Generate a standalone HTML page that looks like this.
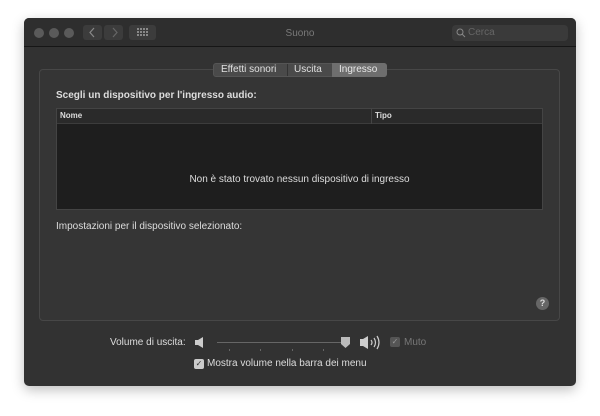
<!DOCTYPE html>
<html><head><meta charset="utf-8"><style>
*{margin:0;padding:0;box-sizing:border-box}
body{width:600px;height:416px;background:#fff;position:relative;font-family:"Liberation Sans",sans-serif;overflow:hidden}
.a{position:absolute}
.win{left:24px;top:18px;width:552px;height:368px;background:#323232;border-radius:5px;box-shadow:0 4px 12px rgba(0,0,0,.25);overflow:hidden}
.tb{left:0;top:0;width:552px;height:29px;background:#2e2e2e;border-bottom:1px solid #161616}
.dot{width:10px;height:10px;border-radius:50%;background:#5a5a5a;top:10px}
.btn{background:#3c3c3c;border-radius:3px;height:15px;top:7px}
.t{color:#ddd;font-size:10px;white-space:nowrap}
</style></head><body>
<div class="a win">
 <div class="a tb">
  <div class="a dot" style="left:10px"></div>
  <div class="a dot" style="left:25px"></div>
  <div class="a dot" style="left:40px"></div>
  <div class="a btn" style="left:59px;width:19px"></div>
  <div class="a btn" style="left:80px;width:19px"></div>
  <svg class="a" style="left:64px;top:9px" width="10" height="11"><path d="M6 1L2 5.5 6 10" stroke="#888" fill="none" stroke-width="1.2"/></svg>
  <svg class="a" style="left:86px;top:9px" width="10" height="11"><path d="M3 1L7 5.5 3 10" stroke="#666" fill="none" stroke-width="1.2"/></svg>
  <div class="a btn" style="left:105px;width:27px"></div>
  <svg class="a" style="left:113px;top:10px" width="11" height="9"><g fill="#888"><rect x="0" y="0" width="2" height="2"/><rect x="3" y="0" width="2" height="2"/><rect x="6" y="0" width="2" height="2"/><rect x="9" y="0" width="2" height="2"/><rect x="0" y="3" width="2" height="2"/><rect x="3" y="3" width="2" height="2"/><rect x="6" y="3" width="2" height="2"/><rect x="9" y="3" width="2" height="2"/><rect x="0" y="6" width="2" height="2"/><rect x="3" y="6" width="2" height="2"/><rect x="6" y="6" width="2" height="2"/><rect x="9" y="6" width="2" height="2"/></g></svg>
  <div class="a" style="left:0;width:552px;top:10px;text-align:center;color:#7a7a7a;font-size:10px">Suono</div>
  <div class="a" style="left:428px;top:7px;width:116px;height:16px;background:#3a3a3a;border-radius:4px"></div>
  <svg class="a" style="left:432px;top:10px" width="10" height="10"><circle cx="4" cy="4" r="3" stroke="#888" fill="none"/><path d="M6 6L9 9" stroke="#888"/></svg>
  <div class="a" style="left:444px;top:9px;color:#666;font-size:10px">Cerca</div>
 </div>
 <div class="a" style="left:15px;top:51px;width:521px;height:252px;border:1px solid #474747;border-radius:4px;background:#353535"></div>
 <div class="a" style="left:189px;top:45px;width:174px;height:14px;border-radius:3px;background:#4a4a4a;border:1px solid #555"></div>
 <div class="a" style="left:308px;top:45px;width:55px;height:14px;border-radius:0 3px 3px 0;background:#6e6e6e"></div>
 <div class="a" style="left:263px;top:46px;width:1px;height:12px;background:#333"></div>
 <div class="a t" style="left:197px;top:46px;color:#e0e0e0">Effetti sonori</div>
 <div class="a t" style="left:270px;top:46px;color:#e0e0e0">Uscita</div>
 <div class="a t" style="left:315px;top:46px;color:#e8e8e8">Ingresso</div>
 <div class="a t" style="left:32px;top:72px;font-weight:bold">Scegli un dispositivo per l'ingresso audio:</div>
 <div class="a" style="left:32px;top:90px;width:487px;height:102px;background:#1e1e1e;border:1px solid #444"></div>
 <div class="a" style="left:33px;top:91px;width:485px;height:15px;background:#2a2a2a;border-bottom:1px solid #3c3c3c"></div>
 <div class="a" style="left:347px;top:91px;width:1px;height:15px;background:#444"></div>
 <div class="a t" style="left:36px;top:93px;font-size:8px;font-weight:bold">Nome</div>
 <div class="a t" style="left:351px;top:93px;font-size:8px;font-weight:bold">Tipo</div>
 <div class="a t" style="left:32px;width:487px;text-align:center;top:156px">Non è stato trovato nessun dispositivo di ingresso</div>
 <div class="a t" style="left:32px;top:203px">Impostazioni per il dispositivo selezionato:</div>
 <div class="a" style="left:512px;top:279px;width:13px;height:13px;border-radius:50%;background:#666;color:#ddd;font-size:9px;font-weight:bold;text-align:center;line-height:13px">?</div>
 <div class="a t" style="left:86px;top:319px">Volume di uscita:</div>
 <svg class="a" style="left:170px;top:318px" width="12" height="13"><path d="M1 4H4L9 1V12L4 9H1Z" fill="#ccc"/></svg>
 <div class="a" style="left:193px;top:324px;width:130px;height:1px;background:#666"></div>
 <div class="a" style="left:205px;top:331px;width:1px;height:2px;background:#666"></div>
 <div class="a" style="left:236px;top:331px;width:1px;height:2px;background:#666"></div>
 <div class="a" style="left:268px;top:331px;width:1px;height:2px;background:#666"></div>
 <div class="a" style="left:299px;top:331px;width:1px;height:2px;background:#666"></div>
 <svg class="a" style="left:316px;top:318px" width="11" height="13"><path d="M1 1H10V8L5.5 12L1 8Z" fill="#bbb"/></svg>
 <svg class="a" style="left:335px;top:316px" width="26" height="17"><path d="M1 5H4L9 2V15L4 12H1Z" fill="#ccc"/><path d="M12 6Q14 8.5 12 11M15 4Q18 8.5 15 13M18 2Q22 8.5 18 15" stroke="#ccc" fill="none" stroke-width="1.2"/></svg>
 <div class="a" style="left:366px;top:319px;width:10px;height:10px;background:#555;border-radius:2px;color:#999;font-size:8px;line-height:10px;text-align:center">✓</div>
 <div class="a t" style="left:380px;top:319px;color:#777">Muto</div>
 <div class="a" style="left:170px;top:341px;width:10px;height:10px;background:#ccc;border-radius:2px;color:#333;font-size:8px;line-height:10px;text-align:center">✓</div>
 <div class="a t" style="left:183px;top:340px">Mostra volume nella barra dei menu</div>
</div>
</body></html>
